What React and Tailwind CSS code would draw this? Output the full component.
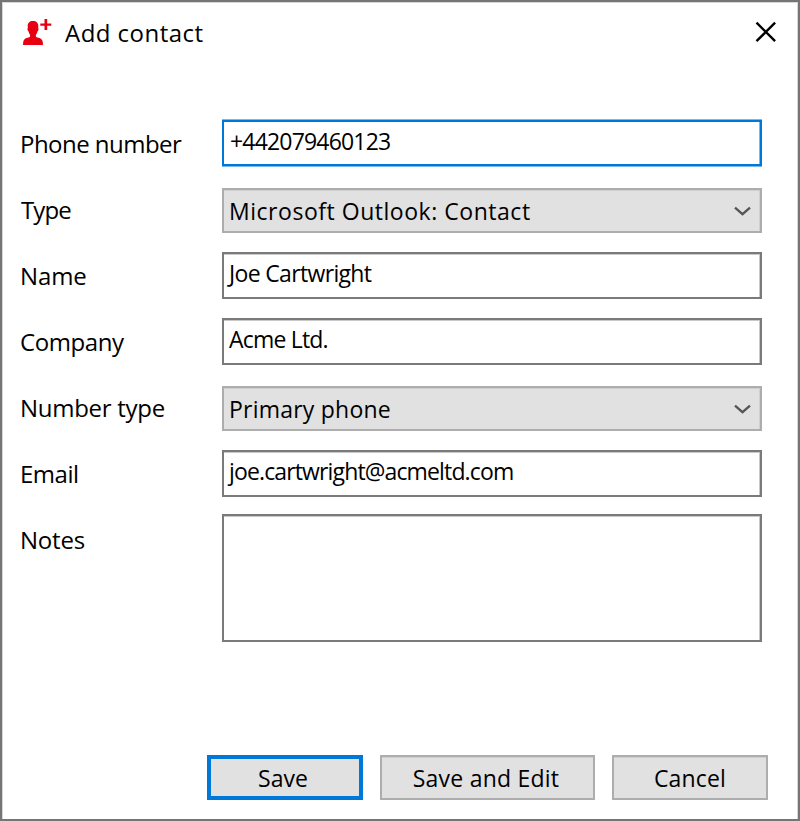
import React from 'react';

const AddContactIcon = () => (
    <svg width="29" height="27" viewBox="0 0 29 27" fill="#e60012">
        <path d="M10 2C6.500 2 4.600 4 4.700 7.200c0 .8.100 1.400.200 1.900-.5.300-.5 1-.3 1.800.2.900.5 1.400 1 1.600.3 1.500.8 2.500 1.500 3.300v1.500c-.2.800-1.200 1.100-2.600 1.500C2 19.500.5 20.600.2 23.200L0 26h20l-.2-2.800c-.3-2.600-1.800-3.700-4.300-4.400-1.400-.4-2.400-.7-2.600-1.500v-1.500c.7-.8 1.200-1.800 1.500-3.300.5-.2.800-.7 1-1.600.2-.8.2-1.500-.3-1.800.1-.5.200-1.100.200-1.900C15.400 4 13.500 2 10 2z" />
        <path d="M21.500 0h2.700v4.400h4.100v2.300h-4.100v4.300h-2.700V6.700h-4.200V4.400h4.200z" />
    </svg>
);

const CloseIcon = () => (
    <svg width="22" height="22" viewBox="0 0 22 22" fill="none" stroke="#000" strokeWidth="2.4">
        <path d="M1.500 1.600l18.600 18.600M20.100 1.600L1.500 20.200" />
    </svg>
);

const ChevronIcon = () => (
    <svg width="18" height="12" viewBox="0 0 18 12" fill="none" stroke="#555" strokeWidth="2.300">
        <path d="M1 2.700l7.500 6.500L16 2.700" />
    </svg>
);

const Row = ({ label, className = 'pt-0.5', children }) => (
    <div className="flex h-[66px]">
        <div className="w-[201px] shrink-0 pt-3 text-2xl leading-7">{label}</div>
        <div className={className}>{children}</div>
    </div>
);

const TextBox = ({ className = 'h-[47px] border-[#7a7a7a] pt-[5px] pl-[5px] shadow-[inset_0_1px_0_#c8c8c8,inset_-1px_0_0_#c8c8c8]', children }) => (
    <div className={`w-[540px] border-2 text-[23px] leading-7 ${className}`}>{children}</div>
);

const SelectBox = ({ children }) => (
    <button type="button" className="flex h-[45px] w-[540px] items-center justify-between border-2 border-[#adadad] bg-[#e1e1e1] pr-2 pl-[5px] text-[23px] leading-7 shadow-[inset_0_1px_0_#cfcfcf,inset_-1px_0_0_#cfcfcf]">
        {children}
        <ChevronIcon />
    </button>
);

const App = () => {
    return (
        <div className="flex h-[821px] w-[800px] flex-col border-2 border-[#767474] bg-white font-['Open_Sans','Noto_Sans',sans-serif] text-black shadow-[inset_1px_1px_0_#d8d8d8,inset_-1px_0_0_#d8d8d8]">
            <header className="flex h-[116px] items-start pt-[17px] pr-[21px] pl-[21px]">
                <AddContactIcon />
                <h1 className="ml-[13px] text-2xl leading-7 tracking-[0.46px]">Add contact</h1>
                <button type="button" aria-label="Close" className="mt-0.5 ml-auto">
                    <CloseIcon />
                </button>
            </header>

            <main className="pl-[19px]">
                <Row label={<span className="-ml-px tracking-[-0.53px]">Phone number</span>}>
                    <TextBox className="h-[46px] border-[#0078d7] pt-[5px] pl-1.5 shadow-[0_1px_0_#7ab8ea,0_-1px_0_#7ab8ea,inset_-1px_0_0_#7ab8ea]">
                        <span className="tracking-[-0.82px]">+442079460123</span>
                    </TextBox>
                </Row>
                <Row label={<span className="tracking-[-0.9px]">Type</span>} className="pt-1">
                    <SelectBox>
                        <span className="tracking-[0.53px]">Microsoft Outlook: Contact</span>
                    </SelectBox>
                </Row>
                <Row label={<span className="-ml-px tracking-[-0.1px]">Name</span>}>
                    <TextBox>
                        <span className="tracking-[-0.66px]">Joe Cartwright</span>
                    </TextBox>
                </Row>
                <Row label={<span className="-ml-px tracking-[-0.4px]">Company</span>}>
                    <TextBox>
                        <span className="tracking-[-0.8px]">Acme Ltd.</span>
                    </TextBox>
                </Row>
                <Row label={<span className="-ml-px tracking-[-0.27px]">Number type</span>} className="pt-1">
                    <SelectBox>
                        <span className="tracking-[0.22px]">Primary phone</span>
                    </SelectBox>
                </Row>
                <Row label={<span className="-ml-px tracking-[-0.5px]">Email</span>}>
                    <TextBox>
                        <span className="tracking-[-0.86px]">joe.cartwright@acmeltd.com</span>
                    </TextBox>
                </Row>
                <Row label={<span className="-ml-px tracking-[-0.2px]">Notes</span>} className="pt-0">
                    <TextBox className="h-32 border-[#7a7a7a] shadow-[inset_0_1px_0_#c8c8c8,inset_-1px_0_0_#c8c8c8]" />
                </Row>
            </main>

            <footer className="mt-auto flex justify-end pr-[30px] pb-[19px] text-[23px] leading-7">
                <button type="button" className="h-[45px] w-[156px] border-4 border-[#0078d7] bg-[#e1e1e1] pr-1 pt-px">
                    Save
                </button>
                <button type="button" className="ml-[17px] h-[45px] w-[215px] border-2 border-[#adadad] bg-[#e1e1e1] pr-[3px] pt-px tracking-[0.22px] shadow-[inset_0_1px_0_#cfcfcf]">
                    Save and Edit
                </button>
                <button type="button" className="ml-[17px] h-[45px] w-[156px] border-2 border-[#adadad] bg-[#e1e1e1] pt-px tracking-[0.15px] shadow-[inset_0_1px_0_#cfcfcf]">
                    Cancel
                </button>
            </footer>
        </div>
    );
};

export default App;
